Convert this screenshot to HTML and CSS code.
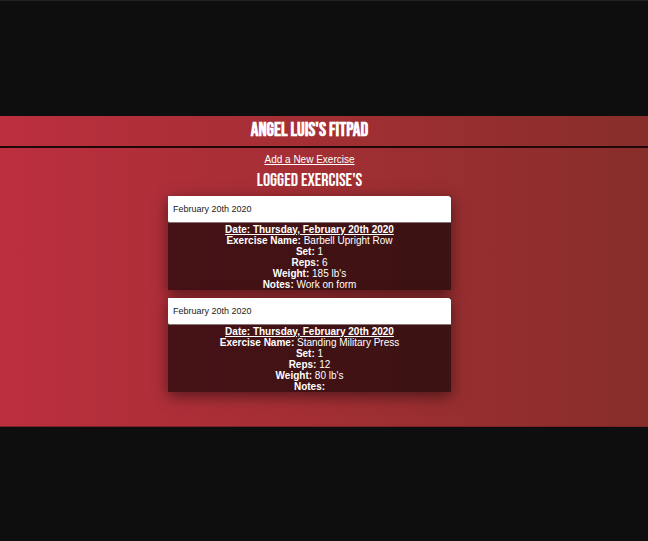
FILE: index.html
```html
<!DOCTYPE html>
<html lang="en">
<head>
<meta charset="utf-8">
<meta name="viewport" content="width=device-width, initial-scale=1">
<title>Angel Luis's FitPad</title>
<link rel="stylesheet" href="styles.css">
</head>
<body>
<div class="app">
  <header class="header">
    <h1 class="title">ANGEL LUIS'S FITPAD</h1>
  </header>
  <main class="content">
    <a class="add-link" href="#new">Add a New Exercise</a>
    <h2 class="subtitle">LOGGED EXERCISE'S</h2>
    <article class="card">
      <div class="card-date">February 20th 2020</div>
      <div class="card-body">
        <p class="day">Date: Thursday, February 20th 2020</p>
        <p><b>Exercise Name:</b> Barbell Upright Row</p>
        <p><b>Set:</b> 1</p>
        <p><b>Reps:</b> 6</p>
        <p><b>Weight:</b> 185 lb's</p>
        <p><b>Notes:</b> Work on form</p>
      </div>
    </article>
    <article class="card">
      <div class="card-date">February 20th 2020</div>
      <div class="card-body">
        <p class="day">Date: Thursday, February 20th 2020</p>
        <p><b>Exercise Name:</b> Standing Military Press</p>
        <p><b>Set:</b> 1</p>
        <p><b>Reps:</b> 12</p>
        <p><b>Weight:</b> 80 lb's</p>
        <p><b>Notes:</b></p>
      </div>
    </article>
  </main>
</div>
</body>
</html>
```
FILE: styles.css
```css
* {
  box-sizing: border-box;
}

body {
  margin: 0;
  min-height: 100vh;
  display: flex;
  flex-direction: column;
  justify-content: center;
  background: #0e0e0e;
  border-top: 1px solid #222;
  color: #fff;
  font-family: "Liberation Sans", Arial, sans-serif;
  font-size: 10px;
  line-height: 11px;
}

h1,
h2,
p {
  margin: 0;
}

.app {
  padding-bottom: 34px;
  background: linear-gradient(90deg, #bc2f3e, #882e2a);
  border-bottom: 1px solid #7c2222;
}

.header {
  padding: 4px 29px 4px 0;
  border-bottom: 2px solid #200709;
  text-align: center;
}

.title,
.subtitle {
  font-family: "Bebas Neue", "Liberation Sans Narrow", "Liberation Sans", sans-serif;
}

.title {
  font-size: 19px;
  font-weight: 700;
  line-height: 22px;
}

.content {
  display: flex;
  flex-direction: column;
  align-items: center;
  padding: 6px 29px 0 0;
}

.add-link {
  color: #fff;
  line-height: 12px;
}

.subtitle {
  margin: 4px 0;
  font-size: 18px;
  line-height: 22px;
  font-weight: 400;
}

.card {
  width: 45%;
  min-width: 283px;
  margin-bottom: 8px;
  background: rgba(0, 0, 0, 0.6);
  box-shadow: 0 4px 14px rgba(0, 0, 0, 0.5);
}

.card:last-child {
  margin-bottom: 0;
}

.card-date {
  padding: 7px 5px;
  background: #fff;
  border-bottom: 1px solid #8a7576;
  border-radius: 0 3px 0 2px;
  color: #222;
  font-size: 9px;
  line-height: 12px;
}

.card-body {
  padding-top: 1px;
  text-align: center;
}

.day {
  font-weight: 700;
  text-decoration: underline;
}
```
